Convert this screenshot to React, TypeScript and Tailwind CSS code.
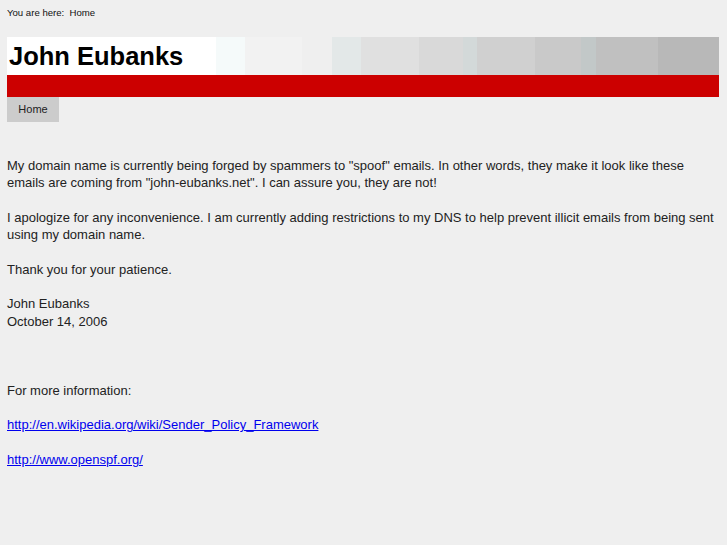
import React from 'react'

const blocks = [
  { w: 'w-[29px]', bg: 'bg-[#f5fafa]' },
  { w: 'w-[57px]', bg: 'bg-[#f2f2f2]' },
  { w: 'w-[30px]', bg: 'bg-[#efefef]' },
  { w: 'w-[29px]', bg: 'bg-[#e3e8e8]' },
  { w: 'w-[58px]', bg: 'bg-[#e0e0e0]' },
  { w: 'w-[44px]', bg: 'bg-[#d9d9d9]' },
  { w: 'w-[14px]', bg: 'bg-[#d3d9d9]' },
  { w: 'w-[58px]', bg: 'bg-[#d0d0d0]' },
  { w: 'w-[46px]', bg: 'bg-[#c9c9c9]' },
  { w: 'w-[15px]', bg: 'bg-[#c2c8c8]' },
  { w: 'w-[62px]', bg: 'bg-[#c0c0c0]' },
  { w: 'w-[61px]', bg: 'bg-[#b8b8b8]' },
]

export default function App() {
  return (
    <div className="min-h-[545px] bg-[#efefef] text-[#222] px-[7px] pt-[7px] font-['Liberation_Sans',Arial,sans-serif]">
      {/* breadcrumb */}
      <div className="text-[9.6px] leading-[12px] text-[#111]">
        You are here:&nbsp; Home
      </div>

      {/* banner */}
      <div className="mt-[18px] w-[712px]">
        <div className="flex h-[38px]">
          <div className="w-[209px] bg-white flex items-center pl-[2px] pt-[2px]">
            <h1 className="text-[25.5px] font-bold text-black leading-none">John Eubanks</h1>
          </div>
          {blocks.map((b, i) => (
            <div key={i} className={`${b.w} ${b.bg}`} />
          ))}
        </div>
        <div className="h-[22px] bg-[#cc0000]" />
      </div>

      {/* nav */}
      <div className="flex">
        <a className="w-[52px] h-[25px] bg-[#cccccc] text-[11px] text-[#222] flex items-center justify-center">Home</a>
      </div>

      {/* content */}
      <div className="mt-[35px] text-[13px] leading-[17.3px] text-[#222]">
        My domain name is currently being forged by spammers to "spoof" emails. In other words, they make it look like these emails are coming from "john-eubanks.net". I can assure you, they are not!
        <br />
        <br />
        I apologize for any inconvenience. I am currently adding restrictions to my DNS to help prevent illicit emails from being sent using my domain name.
        <br />
        <br />
        Thank you for your patience.
        <br />
        <br />
        John Eubanks
        <br />
        October 14, 2006
        <br />
        <br />
        <br />
        <br />
        For more information:
        <br />
        <br />
        <a href="#" className="text-[#0000ee] underline">http://en.wikipedia.org/wiki/Sender_Policy_Framework</a>
        <br />
        <br />
        <a href="#" className="text-[#0000ee] underline">http://www.openspf.org/</a>
      </div>
    </div>
  )
}
